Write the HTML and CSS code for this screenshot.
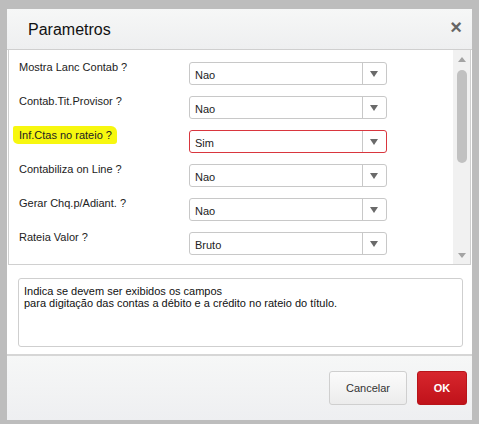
FILE: index.html
```html
<!DOCTYPE html>
<html lang="pt">
<head>
  <meta charset="UTF-8" />
  <title>Parametros</title>
  <link rel="stylesheet" href="styles.css">
</head>
<body>
  <div class="dialog">
    <div class="header">
      <span class="title">Parametros</span>
      <span class="close">&times;</span>
    </div>

    <div class="body">
      <div class="params">
        <div class="rows">
          <div class="row">
            <span class="label">Mostra Lanc Contab ?</span>
            <div class="select"><span class="value">Nao</span><span class="arrow"></span></div>
          </div>
          <div class="row">
            <span class="label">Contab.Tit.Provisor ?</span>
            <div class="select"><span class="value">Nao</span><span class="arrow"></span></div>
          </div>
          <div class="row">
            <span class="label"><span class="highlight">Inf.Ctas no rateio ?</span></span>
            <div class="select active"><span class="value">Sim</span><span class="arrow"></span></div>
          </div>
          <div class="row">
            <span class="label">Contabiliza on Line ?</span>
            <div class="select"><span class="value">Nao</span><span class="arrow"></span></div>
          </div>
          <div class="row">
            <span class="label">Gerar Chq.p/Adiant. ?</span>
            <div class="select"><span class="value">Nao</span><span class="arrow"></span></div>
          </div>
          <div class="row">
            <span class="label">Rateia Valor ?</span>
            <div class="select"><span class="value">Bruto</span><span class="arrow"></span></div>
          </div>
        </div>
        <div class="scrollbar">
          <span class="sb-up"></span>
          <span class="sb-thumb"></span>
          <span class="sb-down"></span>
        </div>
      </div>

      <div class="help">Indica se devem ser exibidos os campos
para digitação das contas a débito e a crédito no rateio do título.</div>
    </div>

    <div class="footer">
      <button class="btn btn-cancel">Cancelar</button>
      <button class="btn btn-ok">OK</button>
    </div>
  </div>
</body>
</html>
```

FILE: styles.css
```css
body {
  margin: 0;
  background: #bdbdbd;
  font-family: "Liberation Sans", Arial, sans-serif;
  color: #222;
}
.dialog {
  margin: 9px 7px 0 7px;
  width: 465px;
  height: 411px;
  background: #fff;
  display: flex;
  flex-direction: column;
}
.header {
  height: 40px;
  border-bottom: 1px solid #cfcfcf;
  background: linear-gradient(#f6f7f7, #eeeff0);
  display: flex;
  align-items: center;
  justify-content: space-between;
  padding: 0 10px 0 21px;
}
.title {
  font-size: 16px;
  color: #111;
  padding-top: 2px;
}
.close {
  font-size: 20px;
  font-weight: bold;
  color: #666;
  margin-top: -3px;
}
.body {
  flex: 1;
  display: flex;
  flex-direction: column;
}
.params {
  height: 214px;
  margin: 0 1px;
  border: 1px solid #d0d0d0;
  border-top: none;
  display: flex;
}
.rows {
  flex: 1;
  padding: 12px 0 0 10px;
}
.row {
  height: 34px;
  display: flex;
}
.label {
  width: 170px;
  font-size: 11px;
  line-height: 13px;
  margin-top: -1px;
}
.highlight {
  background: #f7f70f;
  padding: 3px 5px 3px 6px;
  margin-left: -6px;
  border-radius: 2px 6px 3px 5px;
}
.select {
  width: 196px;
  height: 21px;
  border: 1px solid #c8c8c8;
  border-radius: 3px;
  display: flex;
  align-items: center;
  font-size: 11px;
}
.select.active {
  border-color: #d9363e;
}
.value {
  flex: 1;
  padding-left: 5px;
  padding-top: 2px;
}
.arrow {
  width: 23px;
  height: 21px;
  border-left: 1px solid #c8c8c8;
  position: relative;
}
.arrow::after {
  content: "";
  position: absolute;
  left: 7px;
  top: 8px;
  border-left: 4px solid transparent;
  border-right: 4px solid transparent;
  border-top: 6px solid #6a6a6a;
}
.scrollbar {
  width: 17px;
  background: #f1f1f1;
  display: flex;
  flex-direction: column;
  align-items: center;
}
.sb-up, .sb-down {
  width: 0;
  height: 0;
  border-left: 4px solid transparent;
  border-right: 4px solid transparent;
}
.sb-up {
  margin-top: 7px;
  border-bottom: 5px solid #a3a3a3;
}
.sb-thumb {
  width: 10px;
  height: 93px;
  margin-top: 8px;
  background: #c1c1c1;
  border-radius: 5px;
}
.sb-down {
  margin-top: auto;
  margin-bottom: 6px;
  border-top: 5px solid #a3a3a3;
}
.help {
  margin: 13px 9px 0 11px;
  height: 56px;
  border: 1px solid #cfcfcf;
  border-radius: 3px;
  padding: 6px 5px 5px 5px;
  font-size: 11px;
  line-height: 12px;
  white-space: pre-line;
  color: #111;
}
.footer {
  margin-top: auto;
  height: 66px;
  border-top: 2px solid #d6d6d6;
  background: linear-gradient(#f6f7f7, #eeeff1);
  display: flex;
  align-items: flex-start;
  justify-content: flex-end;
  padding: 15px 5px 0 0;
  gap: 10px;
  box-sizing: border-box;
}
.btn {
  height: 34px;
  padding: 0;
  font-family: "Liberation Sans", Arial, sans-serif;
  font-size: 11px;
  color: #333;
  border: 1px solid #cfcfcf;
  border-radius: 3px;
  background: linear-gradient(#fbfbfb, #ececec);
}
.btn-cancel {
  width: 78px;
}
.btn-ok {
  width: 50px;
  color: #fff;
  font-weight: bold;
  border-color: #b8141a;
  background: linear-gradient(#d7262d, #c0121a);
}
```
